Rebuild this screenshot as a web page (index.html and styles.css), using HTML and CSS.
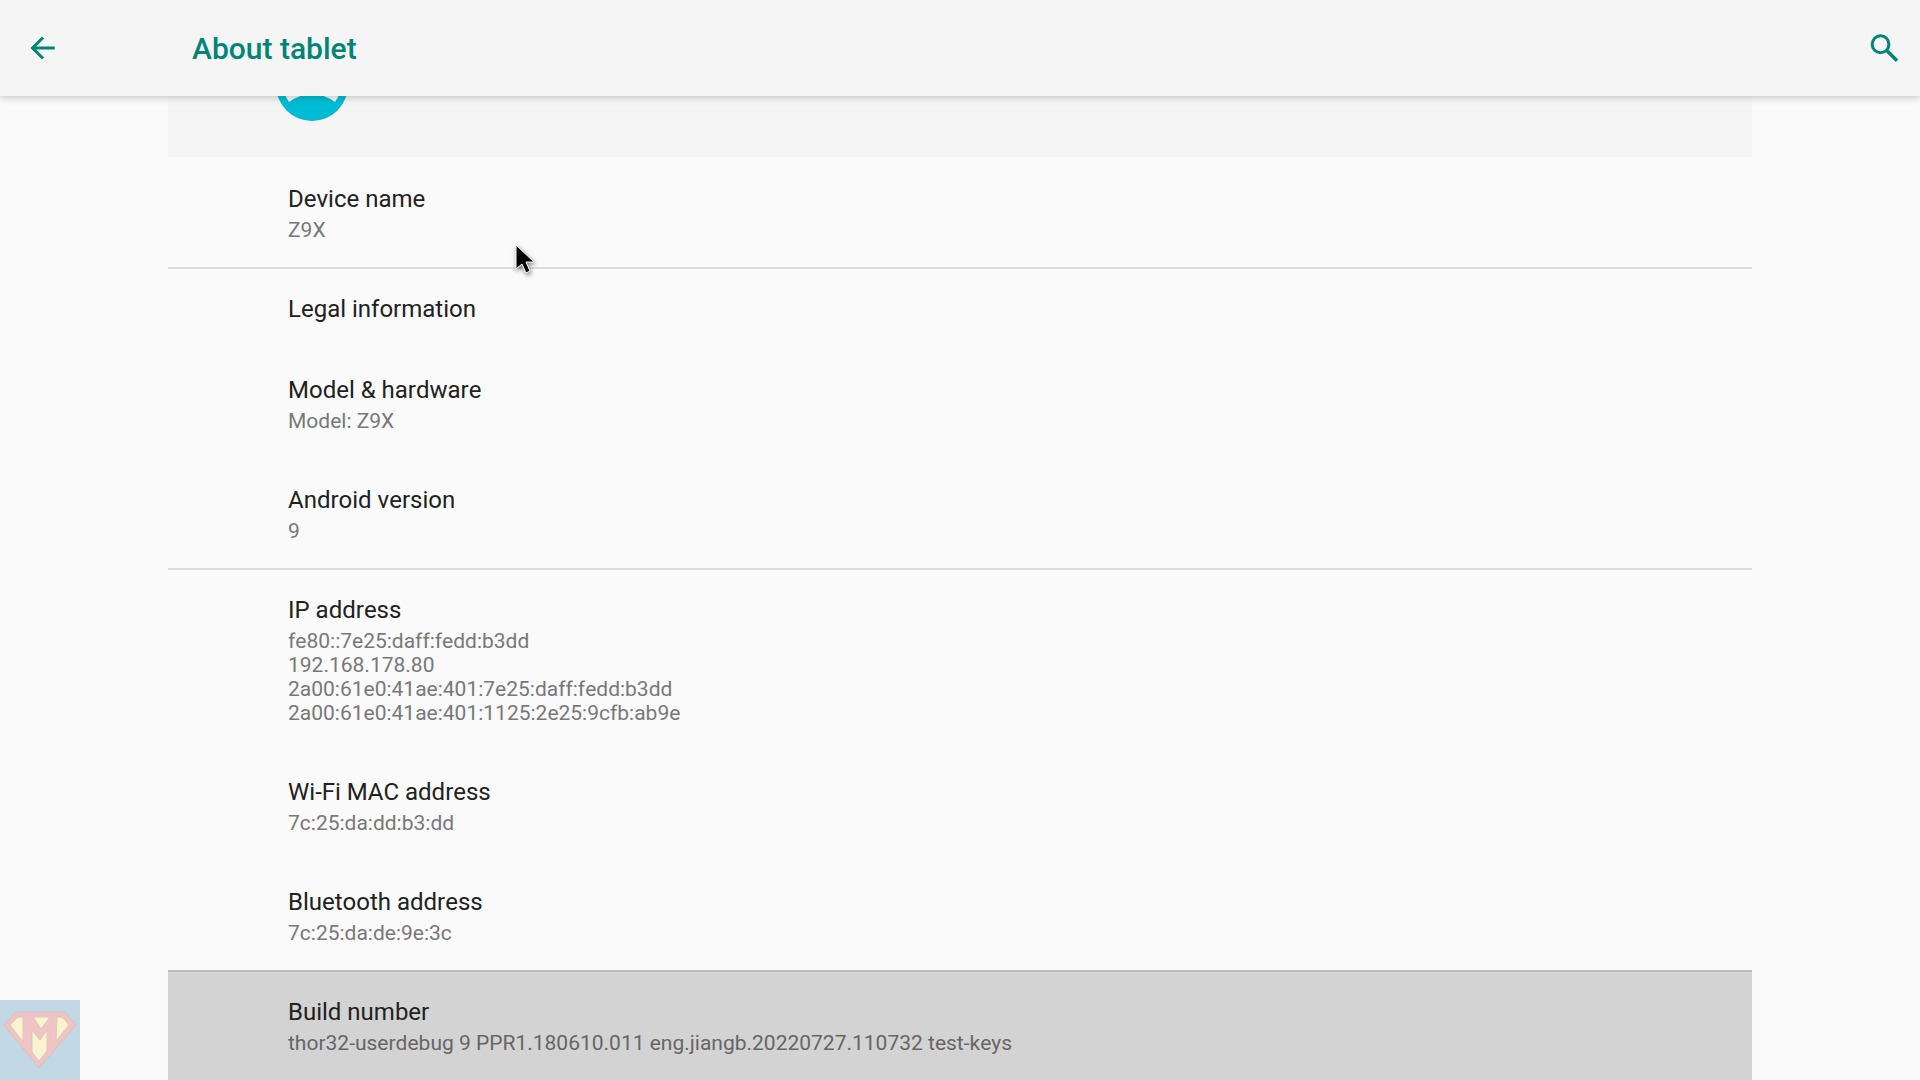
FILE: index.html
```html
<!DOCTYPE html>
<html lang="en">
<head>
<meta charset="utf-8">
<meta name="viewport" content="width=device-width, initial-scale=1">
<title>About tablet</title>
<link rel="stylesheet" href="styles.css">
</head>
<body>
<header class="app-bar">
  <button class="icon-button" type="button" aria-label="Navigate up">
    <svg class="icon" viewBox="0 0 24 24"><path d="M20.500 12H5.700M12.700 5l-7 7 7 7"/></svg>
  </button>
  <h1 class="app-title">About tablet</h1>
  <button class="icon-button" type="button" aria-label="Search">
    <svg class="icon" viewBox="0 0 24 24"><circle cx="9.700" cy="9.500" r="5.600"/><path stroke-width="2.300" d="M13.700 13.500l7 7"/></svg>
  </button>
</header>
<main class="content">
  <section class="account">
    <svg class="avatar" viewBox="0 0 72 72" aria-hidden="true">
      <circle cx="36" cy="36" r="36" fill="#00bcd4"/>
      <path d="M36 7a29 29 0 0 0-23 46Q36 37 59 53A29 29 0 0 0 36 7z" fill="#f5f5f5"/>
      <circle cx="36" cy="26" r="12" fill="#00bcd4"/>
    </svg>
  </section>
  <ul class="list">
    <li class="row"><h2 class="title">Device name</h2><p class="summary">Z9X</p></li>
    <li class="row divided"><h2 class="title">Legal information</h2></li>
    <li class="row"><h2 class="title">Model &amp; hardware</h2><p class="summary">Model: Z9X</p></li>
    <li class="row"><h2 class="title">Android version</h2><p class="summary">9</p></li>
    <li class="row divided"><h2 class="title">IP address</h2><p class="summary">fe80::7e25:daff:fedd:b3dd<br>192.168.178.80<br>2a00:61e0:41ae:401:7e25:daff:fedd:b3dd<br>2a00:61e0:41ae:401:1125:2e25:9cfb:ab9e</p></li>
    <li class="row"><h2 class="title">Wi-Fi MAC address</h2><p class="summary">7c:25:da:dd:b3:dd</p></li>
    <li class="row"><h2 class="title">Bluetooth address</h2><p class="summary">7c:25:da:de:9e:3c</p></li>
    <li class="row divided pressed"><h2 class="title">Build number</h2><p class="summary">thor32-userdebug 9 PPR1.180610.011 eng.jiangb.20220727.110732 test-keys</p></li>
  </ul>
</main>
<svg class="watermark" viewBox="0 0 80 80" aria-hidden="true">
  <rect width="80" height="80" fill="#c2d8e5"/>
  <path d="M16 12h49l11 13-37 43L4 25z" fill="#f0c4c5" stroke="#d8bfc5"/>
  <path d="M18 17h5v25L10 25zM33 17h17l-9 12zM57 17h5l7 8-13 16zM32 30l8 10 7-10v21l-8 10-7-9z" fill="#fbf3cf" stroke="#d9c8bd"/>
</svg>
<svg class="pointer" viewBox="0 0 24 34" aria-hidden="true"><path d="M2 2v24l6-5 4 9 4-2-4-9h8z"/></svg>
</body>
</html>
```
FILE: styles.css
```css
* { box-sizing: border-box; }

body {
  margin: 0;
  background: #fafafa;
  color: #212121;
  font-family: Roboto, sans-serif;
}

.app-bar {
  position: relative;
  display: flex;
  align-items: center;
  height: 96px;
  padding: 0 18px 0 24px;
  background: #f5f5f5;
  box-shadow: 0 1px 8px rgba(0, 0, 0, 0.24);
}

.icon-button {
  display: flex;
  padding: 0;
  border: 0;
  background: none;
  color: #008577;
}

.icon {
  width: 36px;
  height: 36px;
  fill: none;
  stroke: currentColor;
  stroke-width: 2;
}

.app-title {
  flex: 1;
  margin: 0 0 0 132px;
  padding-top: 2px;
  color: #008577;
  font-size: 30px;
  font-weight: 500;
  line-height: 36px;
}

.content { margin: 0 168px; }

.account {
  display: flex;
  align-items: flex-end;
  height: 61px;
  padding: 0 108px 36px;
  overflow: hidden;
  background: #f5f5f5;
}

.avatar {
  flex: none;
  width: 72px;
  height: 72px;
}

.list {
  margin: 0;
  padding: 0;
  list-style: none;
  font-kerning: none;
}

.row { padding: 28px 120px 25px; }

.divided {
  padding-top: 26px;
  border-top: 2px solid #dcdcdc;
}

.pressed {
  border-color: #b9bab9;
  background: #d3d3d3;
}

.title {
  margin: 0;
  font-size: 24px;
  font-weight: 400;
  line-height: 28px;
}

.summary {
  margin: 5px 0 0;
  color: #787878;
  font-size: 21px;
  line-height: 24px;
}

.pressed .summary { color: #666; }

.watermark {
  position: fixed;
  bottom: 0;
  left: 0;
  width: 80px;
  height: 80px;
}

.pointer {
  position: absolute;
  top: 243px;
  left: 514px;
  width: 24px;
  height: 34px;
  overflow: visible;
  stroke: #fff;
  filter: drop-shadow(1px 2px 2px rgba(0, 0, 0, 0.5));
}
```
